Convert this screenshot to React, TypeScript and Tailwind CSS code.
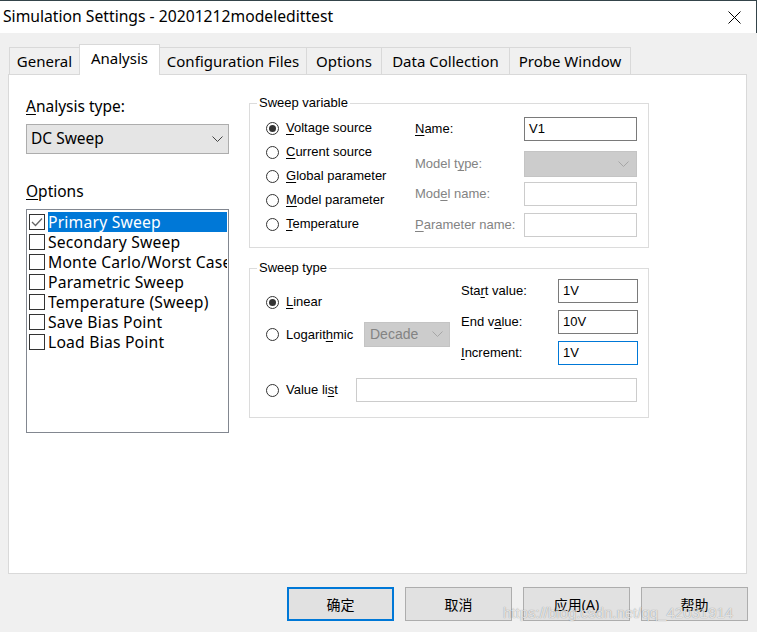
import React from 'react';

const cjk = "font-['Noto_Sans','Noto_Sans_CJK_SC',sans-serif]";
const ms = "font-['Liberation_Sans','Noto_Sans_CJK_SC',sans-serif]";

const tabs = [
  { label: 'General', w: 'w-[71px]' },
  { label: 'Analysis', w: 'w-[81px]', active: true },
  { label: 'Configuration Files', w: 'w-[148px]' },
  { label: 'Options', w: 'w-[76px]' },
  { label: 'Data Collection', w: 'w-[129px]' },
  { label: 'Probe Window', w: 'w-[122px]' },
];

const options = [
  'Primary Sweep',
  'Secondary Sweep',
  'Monte Carlo/Worst Case',
  'Parametric Sweep',
  'Temperature (Sweep)',
  'Save Bias Point',
  'Load Bias Point',
];

function U({ children }: { children: React.ReactNode }) {
  return <span className="underline decoration-1 underline-offset-[2px]">{children}</span>;
}

function Chevron({ color }: { color: string }) {
  return (
    <svg width="11" height="7" viewBox="0 0 11 7" className="shrink-0">
      <path d="M0.5 0.5 L5.5 5.5 L10.5 0.5" fill="none" stroke={color} strokeWidth="1" />
    </svg>
  );
}

function Radio({
  checked,
  children,
  labelClass = '',
}: {
  checked?: boolean;
  children: React.ReactNode;
  labelClass?: string;
}) {
  return (
    <div className="flex items-center">
      <span className="w-[13px] h-[13px] rounded-full border border-[#333333] bg-white flex items-center justify-center shrink-0">
        {checked && <span className="w-[7px] h-[7px] rounded-full bg-[#333333]" />}
      </span>
      <span className={'ml-[7px] ' + labelClass}>{children}</span>
    </div>
  );
}

function Field({
  label,
  labelW,
  inputW,
  value,
  kind = 'input',
  h = 'h-[24px]',
  mt = '',
}: {
  label: React.ReactNode;
  labelW: string;
  inputW: string;
  value?: string;
  kind?: 'input' | 'disabled' | 'select' | 'focus';
  h?: string;
  mt?: string;
}) {
  const disabled = kind === 'disabled' || kind === 'select';
  let box = 'border border-[#7a7a7a] bg-white';
  if (kind === 'disabled') box = 'border border-[#cccccc] bg-white';
  if (kind === 'select') box = 'border border-[#c4c4c4] bg-[#cccccc] justify-end pr-[7px]';
  if (kind === 'focus') box = 'border border-[#0078d7] bg-white';
  return (
    <div className={'flex items-center ' + mt}>
      <div className={labelW + (disabled ? ' text-[#838383]' : ' text-black')}>{label}</div>
      <div className={inputW + ' ' + h + ' flex items-center pl-[4px] text-black ' + box}>
        {kind === 'select' ? <Chevron color="#a6a6a6" /> : value}
      </div>
    </div>
  );
}

export default function App() {
  return (
    <div className={'w-[757px] h-[632px] bg-[#f0f0f0] overflow-hidden relative ' + cjk}>
      {/* title bar */}
      <div className="h-[33px] bg-white border-t border-r border-[#34444a] flex items-center justify-between pl-[3px] pr-[15px]">
        <span className="text-[15.7px] text-black">Simulation Settings - 20201212modeledittest</span>
        <svg width="13" height="13" viewBox="0 0 13 13">
          <path d="M0.5 0.5 L12.5 12.5 M12.5 0.5 L0.5 12.5" stroke="#000" strokeWidth="1" />
        </svg>
      </div>

      {/* tabs */}
      <div className="h-[41px] flex items-end pl-[9px]">
        {tabs.map((t, i) => (
          <div
            key={t.label}
            className={
              t.w +
              (i > 0 ? ' -ml-[1px]' : '') +
              (t.active
                ? ' h-[31px] -mb-[1px] relative z-10 bg-white border border-b-0 border-[#d9d9d9] pb-[3px]'
                : ' h-[27px] bg-[#f0f0f0] border border-b-0 border-[#d9d9d9]') +
              ' flex items-center justify-center text-[15px] text-black'
            }
          >
            {t.label}
          </div>
        ))}
      </div>

      {/* panel */}
      <div className="ml-[8px] w-[739px] h-[500px] bg-white border border-[#d9d9d9] flex pl-[17px]">
        {/* left column */}
        <div className="w-[203px] flex flex-col">
          <div className="mt-[21px] h-[20px] leading-[20px] text-[15.5px] text-black">
            <U>A</U>nalysis type:
          </div>
          <div className="mt-[8px] h-[30px] bg-[#e5e5e5] border border-[#adadad] flex items-center justify-between pl-[4px] pr-[5px] text-[15.5px] text-black">
            <span>DC Sweep</span>
            <Chevron color="#444444" />
          </div>
          <div className="mt-[27px] h-[20px] leading-[20px] text-[15.5px] text-black">
            <U>O</U>ptions
          </div>
          <div className="mt-[8px] h-[224px] border border-[#828790] bg-white pt-[2px] pl-[2px] pr-[1px] overflow-hidden">
            {options.map((o, i) => (
              <div key={o} className="h-[20px] flex items-center">
                <span className="w-[16px] h-[16px] border border-[#333333] bg-white shrink-0 flex items-center justify-center">
                  {i === 0 && (
                    <svg width="12" height="10" viewBox="0 0 12 10">
                      <path d="M1 5 L4.5 8.5 L11 1.5" fill="none" stroke="#666" strokeWidth="1.3" />
                    </svg>
                  )}
                </span>
                <span
                  className={
                    'ml-[3px] h-[20px] leading-[20px] text-[15.7px] tracking-[0.2px] whitespace-nowrap overflow-hidden flex-1 ' +
                    (i === 0 ? 'bg-[#0078d7] text-white' : 'text-black')
                  }
                >
                  {o}
                </span>
              </div>
            ))}
          </div>
        </div>

        {/* right column */}
        <div className={'ml-[20px] mt-[20px] w-[400px] text-[13px] ' + ms}>
          <fieldset className="h-[153px] border border-[#dcdcdc]">
            <legend className="ml-[7px] px-[2px] leading-[16px] text-black">Sweep variable</legend>
            <div className="flex">
              <div className="pl-[16px] w-[165px] pt-[5px] text-black">
                <div className="h-[24px] flex items-center">
                  <Radio checked>
                    <U>V</U>oltage source
                  </Radio>
                </div>
                <div className="h-[24px] flex items-center">
                  <Radio>
                    <U>C</U>urrent source
                  </Radio>
                </div>
                <div className="h-[24px] flex items-center">
                  <Radio>
                    <U>G</U>lobal parameter
                  </Radio>
                </div>
                <div className="h-[24px] flex items-center">
                  <Radio>
                    <U>M</U>odel parameter
                  </Radio>
                </div>
                <div className="h-[24px] flex items-center">
                  <Radio>
                    <U>T</U>emperature
                  </Radio>
                </div>
              </div>
              <div className="pt-[6px] flex flex-col">
                <Field
                  label={
                    <>
                      <U>N</U>ame:
                    </>
                  }
                  labelW="w-[109px]"
                  inputW="w-[113px]"
                  value="V1"
                />
                <Field
                  label={
                    <>
                      Model t<U>y</U>pe:
                    </>
                  }
                  labelW="w-[109px]"
                  inputW="w-[113px]"
                  kind="select"
                  h="h-[26px]"
                  mt="mt-[10px]"
                />
                <Field
                  label={
                    <>
                      Mod<U>e</U>l name:
                    </>
                  }
                  labelW="w-[109px]"
                  inputW="w-[113px]"
                  kind="disabled"
                  mt="mt-[5px]"
                />
                <Field
                  label={
                    <>
                      <U>P</U>arameter name:
                    </>
                  }
                  labelW="w-[109px]"
                  inputW="w-[113px]"
                  kind="disabled"
                  mt="mt-[7px]"
                />
              </div>
            </div>
          </fieldset>

          <fieldset className="mt-[12px] h-[158px] border border-[#dcdcdc]">
            <legend className="ml-[7px] px-[2px] leading-[16px] text-black">Sweep type</legend>
            <div className="flex h-[88px]">
              <div className="pl-[16px] w-[211px] text-black">
                <div className="mt-[14px] h-[24px] flex items-center">
                  <Radio checked>
                    <U>L</U>inear
                  </Radio>
                </div>
                <div className="mt-[8px] h-[25px] flex items-center">
                  <Radio labelClass="w-[78px]">
                    Logarit<U>h</U>mic
                  </Radio>
                  <div className="w-[86px] h-[25px] bg-[#cccccc] border border-[#c4c4c4] flex items-center justify-between pl-[5px] pr-[6px] text-[#838383] text-[14px]">
                    <span>Decade</span>
                    <Chevron color="#a6a6a6" />
                  </div>
                </div>
              </div>
              <div className="pt-[3px] flex flex-col">
                <Field
                  label={
                    <>
                      Sta<U>r</U>t value:
                    </>
                  }
                  labelW="w-[97px]"
                  inputW="w-[80px]"
                  value="1V"
                />
                <Field
                  label={
                    <>
                      End v<U>a</U>lue:
                    </>
                  }
                  labelW="w-[97px]"
                  inputW="w-[80px]"
                  value="10V"
                  mt="mt-[7px]"
                />
                <Field
                  label={
                    <>
                      <U>I</U>ncrement:
                    </>
                  }
                  labelW="w-[97px]"
                  inputW="w-[80px]"
                  value="1V"
                  kind="focus"
                  mt="mt-[7px]"
                />
              </div>
            </div>
            <div className="mt-[14px] pl-[16px] h-[24px] flex items-center text-black">
              <Radio labelClass="w-[70px]">
                Value li<U>s</U>t
              </Radio>
              <div className="w-[281px] h-[24px] border border-[#cccccc] bg-white" />
            </div>
          </fieldset>
        </div>
      </div>

      {/* buttons */}
      <div className="mt-[13px] pr-[9px] flex justify-end gap-[11px] text-[14px] text-black">
        <button className="w-[107px] h-[34px] bg-[#e1e1e1] border-2 border-[#0078d7]">确定</button>
        <button className="w-[107px] h-[34px] bg-[#e1e1e1] border border-[#adadad]">取消</button>
        <button className="w-[107px] h-[34px] bg-[#e1e1e1] border border-[#adadad]">应用(A)</button>
        <button className="w-[107px] h-[34px] bg-[#e1e1e1] border border-[#adadad]">帮助</button>
      </div>

      {/* watermark */}
      <div className="absolute left-[503px] top-[602px] text-[15px] font-['Liberation_Sans',sans-serif] text-white/75 [text-shadow:0_0_1px_rgba(0,0,0,0.45)] whitespace-nowrap pointer-events-none">
        https://blog.csdn.net/qq_42031914
      </div>
    </div>
  );
}
